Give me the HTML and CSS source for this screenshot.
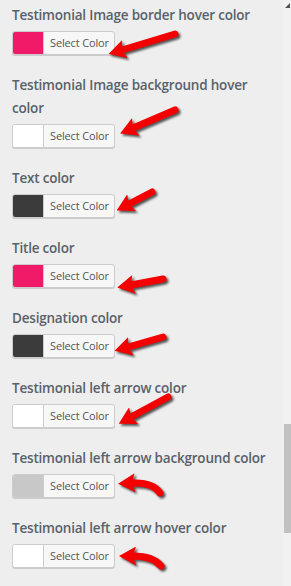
FILE: index.html
```html
<!DOCTYPE html>
<html lang="en">
<head>
  <meta charset="UTF-8">
  <meta name="viewport" content="width=device-width, initial-scale=1.0">
  <title>Testimonial colors</title>
  <link rel="stylesheet" href="styles.css">
</head>
<body>

  <div class="panel">
    <div class="fields">
      <div class="field">
        <span class="field-label">Testimonial Image border hover color</span>
        <button class="color-btn"><span class="swatch swatch-pink"></span><span class="btn-text">Select Color</span></button>
      </div>
      <div class="field">
        <span class="field-label">Testimonial Image background hover color</span>
        <button class="color-btn"><span class="swatch swatch-white"></span><span class="btn-text">Select Color</span></button>
      </div>
      <div class="field">
        <span class="field-label">Text color</span>
        <button class="color-btn"><span class="swatch swatch-dark"></span><span class="btn-text">Select Color</span></button>
      </div>
      <div class="field">
        <span class="field-label">Title color</span>
        <button class="color-btn"><span class="swatch swatch-pink"></span><span class="btn-text">Select Color</span></button>
      </div>
      <div class="field">
        <span class="field-label">Designation color</span>
        <button class="color-btn"><span class="swatch swatch-dark"></span><span class="btn-text">Select Color</span></button>
      </div>
      <div class="field">
        <span class="field-label">Testimonial left arrow color</span>
        <button class="color-btn"><span class="swatch swatch-white"></span><span class="btn-text">Select Color</span></button>
      </div>
      <div class="field">
        <span class="field-label">Testimonial left arrow background color</span>
        <button class="color-btn"><span class="swatch swatch-gray"></span><span class="btn-text">Select Color</span></button>
      </div>
      <div class="field">
        <span class="field-label">Testimonial left arrow hover color</span>
        <button class="color-btn"><span class="swatch swatch-white"></span><span class="btn-text">Select Color</span></button>
      </div>
    </div>

    <div class="scrollbar">
      <svg class="scroll-up" width="5" height="5" viewBox="0 0 5 5"><path d="M5 0 L5 5 L0 5 Z" fill="#505050"/></svg>
      <div class="scroll-thumb"></div>
    </div>
  </div>

  <!-- red annotation arrows drawn over the screenshot -->
  <svg class="annotations" width="291" height="586" viewBox="0 0 291 586">
    <defs>
      <marker id="head" viewBox="0 0 17 19" refX="3" refY="9.5" markerWidth="17" markerHeight="19" markerUnits="userSpaceOnUse" orient="auto">
        <path d="M0 0 L17 9.5 L0 19 L3 9.5 Z" fill="#f50000"/>
      </marker>
    </defs>
    <g class="arrow-set" fill="none" stroke="#f50000" stroke-width="7" stroke-linecap="round">
      <path d="M175 34 L122 50" marker-end="url(#head)"/>
      <path d="M175 110 L133 128" marker-end="url(#head)"/>
      <path d="M152 192 L129 204" marker-end="url(#head)"/>
      <path d="M163 279 L131 285" marker-end="url(#head)"/>
      <path d="M163 337 L128 347" marker-end="url(#head)"/>
      <path d="M168 397 L131 417" marker-end="url(#head)"/>
      <path d="M160 493 Q153 482 132 483" marker-end="url(#head)"/>
      <path d="M161 566 Q153 556 133 556" marker-end="url(#head)"/>
    </g>
  </svg>

</body>
</html>
```

FILE: styles.css
```css
body {
  margin: 0;
  background-color: #eeeeee;
  font-family: 'Open Sans', 'Noto Sans', sans-serif;
  position: relative;
}
.panel {
  display: flex;
  min-height: 586px;
}
.fields {
  flex: 1;
  padding: 4px 14px 0 12px;
}
.field {
  margin-bottom: 19px;
}
.field-label {
  display: block;
  font-size: 13.5px;
  font-weight: 600;
  line-height: 23px;
  color: #59616a;
  letter-spacing: -0.2px;
  margin-bottom: 4px;
}
.color-btn {
  display: flex;
  align-items: stretch;
  height: 24px;
  padding: 0;
  border: 1px solid #cccccc;
  border-radius: 3px;
  background: #f7f7f7;
  box-shadow: 0 1px 0 #cccccc;
  overflow: hidden;
  cursor: pointer;
}
.swatch {
  width: 30px;
  border-right: 1px solid #cccccc;
}
.swatch-pink { background: #f01a68; }
.swatch-white { background: #ffffff; }
.swatch-dark { background: #3b3b3b; }
.swatch-gray { background: #c8c8c8; }
.btn-text {
  font-family: 'Open Sans', 'Noto Sans', sans-serif;
  font-size: 11px;
  line-height: 22px;
  color: #555555;
  letter-spacing: -0.15px;
  padding: 0 5px 0 6px;
}
.scrollbar {
  width: 8px;
  background: #f1f1f1;
  display: flex;
  flex-direction: column;
  align-items: flex-end;
}
.scroll-up {
  display: block;
  margin: 3px 1px 0 0;
}
.scroll-thumb {
  width: 7px;
  height: 109px;
  margin-top: 416px;
  background: #c1c1c1;
}
.annotations {
  position: absolute;
  top: 0;
  left: 0;
  pointer-events: none;
  filter: drop-shadow(2px 2px 1px rgba(0, 0, 0, 0.65));
}
```
